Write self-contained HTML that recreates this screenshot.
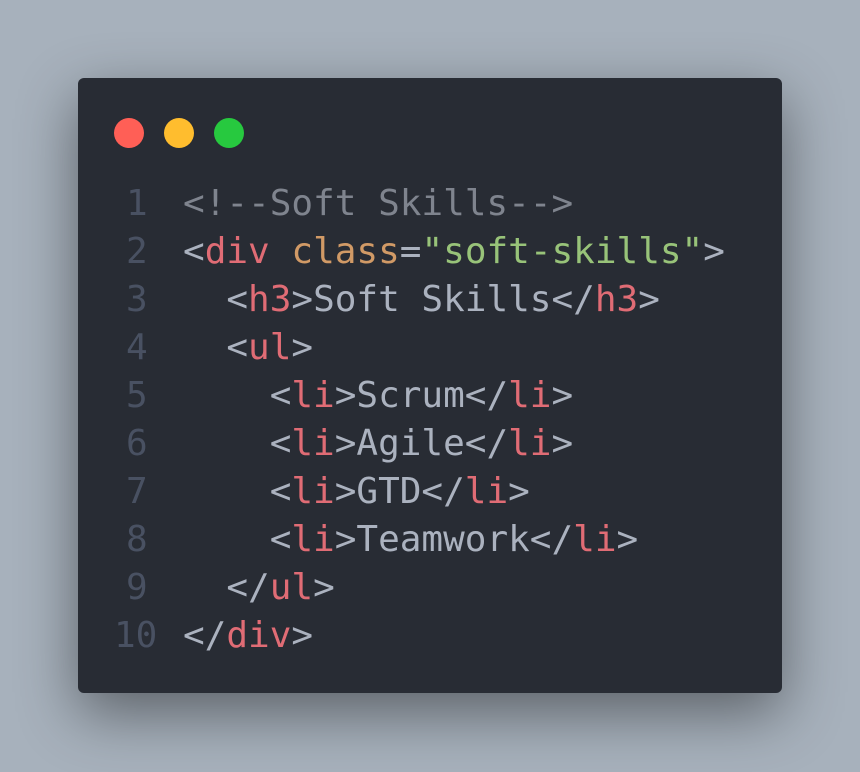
<!DOCTYPE html>
<html><head><meta charset="utf-8"><style>
html,body{margin:0;padding:0}
body{width:860px;height:772px;background:#a7b1bc;position:relative;overflow:hidden;font-family:"DejaVu Sans Mono",monospace}
.card{position:absolute;left:78px;top:78px;width:704px;height:615px;background:#282c34;border-radius:6px;box-shadow:0 20px 60px rgba(0,0,0,.45)}
.dot{position:absolute;top:118px;width:30px;height:30px;border-radius:50%}
.l{position:absolute;left:0;height:48px;line-height:48px;font-size:36px;white-space:pre;color:#abb2bf}
.n{position:absolute;color:#495162;font-size:36px;line-height:48px;white-space:pre}
.c{color:#7f848e}.t{color:#e06c75}.a{color:#d19a66}.s{color:#98c379}
</style></head><body>
<div class="card"></div>
<div class="dot" style="left:114px;background:#ff5f56"></div>
<div class="dot" style="left:164px;background:#ffbd2e"></div>
<div class="dot" style="left:214px;background:#27c93f"></div>
<div class="n" style="left:126px;top:180px">1</div>
<div class="n" style="left:126px;top:228px">2</div>
<div class="n" style="left:126px;top:276px">3</div>
<div class="n" style="left:126px;top:324px">4</div>
<div class="n" style="left:126px;top:372px">5</div>
<div class="n" style="left:126px;top:420px">6</div>
<div class="n" style="left:126px;top:468px">7</div>
<div class="n" style="left:126px;top:516px">8</div>
<div class="n" style="left:126px;top:564px">9</div>
<div class="n" style="left:114px;top:612px">10</div>
<div class="l" style="left:183px;top:180px"><span class="c">&lt;!--Soft Skills--&gt;</span></div>
<div class="l" style="left:183px;top:228px">&lt;<span class="t">div</span> <span class="a">class</span>=<span class="s">"soft-skills"</span>&gt;</div>
<div class="l" style="left:183px;top:276px">  &lt;<span class="t">h3</span>&gt;Soft Skills&lt;/<span class="t">h3</span>&gt;</div>
<div class="l" style="left:183px;top:324px">  &lt;<span class="t">ul</span>&gt;</div>
<div class="l" style="left:183px;top:372px">    &lt;<span class="t">li</span>&gt;Scrum&lt;/<span class="t">li</span>&gt;</div>
<div class="l" style="left:183px;top:420px">    &lt;<span class="t">li</span>&gt;Agile&lt;/<span class="t">li</span>&gt;</div>
<div class="l" style="left:183px;top:468px">    &lt;<span class="t">li</span>&gt;GTD&lt;/<span class="t">li</span>&gt;</div>
<div class="l" style="left:183px;top:516px">    &lt;<span class="t">li</span>&gt;Teamwork&lt;/<span class="t">li</span>&gt;</div>
<div class="l" style="left:183px;top:564px">  &lt;/<span class="t">ul</span>&gt;</div>
<div class="l" style="left:183px;top:612px">&lt;/<span class="t">div</span>&gt;</div>
</body></html>
